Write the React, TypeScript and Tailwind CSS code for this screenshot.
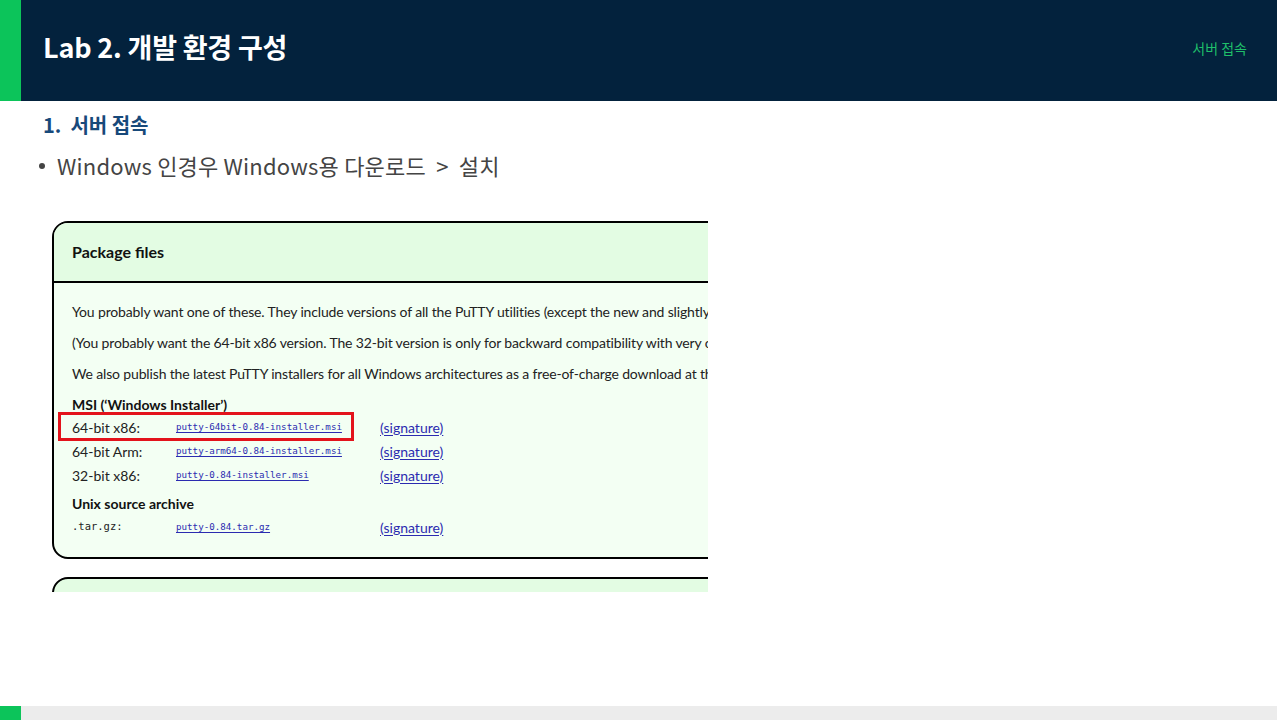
import React from "react";

const page = { fontFamily: 'Lato, "Noto Sans", sans-serif' };
const kr = { fontFamily: '"Noto Sans CJK KR", "Noto Sans", sans-serif' };
const mono = { fontFamily: '"DejaVu Sans Mono", "Liberation Mono", monospace' };

type Row = { label: string; file: string; mono?: boolean };

const msiRows: Row[] = [
  { label: "64-bit x86:", file: "putty-64bit-0.84-installer.msi" },
  { label: "64-bit Arm:", file: "putty-arm64-0.84-installer.msi" },
  { label: "32-bit x86:", file: "putty-0.84-installer.msi" },
];

function FileRow({ row, boxed }: { row: Row; boxed?: boolean }) {
  return (
    <div className="relative flex items-center h-[24px]">
      {boxed && (
        <div className="absolute left-[-14px] top-[-3px] w-[296px] h-[29px] border-[3px] border-[#e3131b]" />
      )}
      <span
        className={row.mono ? "w-[104px] text-[10.5px] text-[#222]" : "w-[104px] text-[14px] text-[#222]"}
        style={row.mono ? mono : page}
      >
        {row.label}
      </span>
      <span
        className="w-[204px] text-[9.2px] text-[#2b2bb0] underline underline-offset-2"
        style={mono}
      >
        {row.file}
      </span>
      <span className="text-[14px] text-[#2b2bb0] underline underline-offset-2" style={page}>
        (signature)
      </span>
    </div>
  );
}

export default function App() {
  return (
    <div className="w-[1280px] h-[720px] bg-white flex flex-col overflow-hidden">
      {/* top banner */}
      <div className="flex h-[101px] w-[1277px] shrink-0">
        <div className="w-[21px] bg-[#0cc45a]" />
        <div className="flex-1 bg-[#03223d] flex items-center justify-between pl-[22px] pr-[30px]">
          <h1 className="text-white text-[27px] font-bold tracking-[-0.2px] -mt-[6px]" style={kr}>
            Lab 2. 개발 환경 구성
          </h1>
          <span className="text-[#1fbf6a] text-[14px] -mt-[4px]" style={kr}>
            서버 접속
          </span>
        </div>
      </div>

      {/* body */}
      <div className="flex-1 flex flex-col pl-[38px]">
        <div className="pl-[5px] pt-[9px] text-[#17497a] text-[20px] font-bold" style={kr}>
          1.&nbsp; 서버 접속
        </div>
        <div className="flex items-center gap-[12px] mt-[9px] text-[#444] text-[22px] tracking-[0.2px]" style={kr}>
          <span className="w-[6px] h-[6px] rounded-full bg-[#444] ml-[1px]" />
          <span>Windows 인경우 Windows용 다운로드&nbsp; &gt;&nbsp; 설치</span>
        </div>

        {/* embedded download page */}
        <div className="mt-[39px] ml-[14px] w-[656px] h-[371px] overflow-hidden flex flex-col">
          <div className="w-[700px] h-[338px] border-2 border-black rounded-[16px] bg-[#f3fff3] flex flex-col shrink-0">
            <div className="h-[60px] bg-[#e3fce3] rounded-t-[14px] border-b-2 border-black flex items-center pl-[18px]">
              <span className="text-[16px] font-bold text-[#111]" style={page}>
                Package files
              </span>
            </div>
            <div className="pl-[18px] pt-[18px] text-[14px] text-[#222] whitespace-nowrap" style={page}>
              <p className="h-[31px] tracking-[-0.15px]">
                You probably want one of these. They include versions of all the PuTTY utilities (except the new and slightly experimental Windows pageant-sourced agent)
              </p>
              <p className="h-[31px] tracking-[-0.15px]">
                (You probably want the 64-bit x86 version. The 32-bit version is only for backward compatibility with very old systems.)
              </p>
              <p className="h-[31px] tracking-[-0.15px]">
                We also publish the latest PuTTY installers for all Windows architectures as a free-of-charge download at the Microsoft Store.
              </p>
              <p className="text-[14px] font-bold text-[#111] h-[21px]">MSI (‘Windows Installer’)</p>
              <div className="flex flex-col">
                {msiRows.map((r, i) => (
                  <FileRow key={r.file} row={r} boxed={i === 0} />
                ))}
              </div>
              <p className="text-[14px] font-bold text-[#111] mt-[4px] h-[24px] flex items-center">Unix source archive</p>
              <FileRow row={{ label: ".tar.gz:", file: "putty-0.84.tar.gz", mono: true }} />
            </div>
          </div>
          <div className="mt-[18px] w-[700px] h-[40px] border-2 border-black rounded-t-[16px] bg-[#e3fce3] shrink-0" />
        </div>
      </div>

      {/* footer strip */}
      <div className="flex h-[14px] w-[1277px] shrink-0">
        <div className="w-[21px] bg-[#0cc45a]" />
        <div className="flex-1 bg-[#ececec]" />
      </div>
    </div>
  );
}
